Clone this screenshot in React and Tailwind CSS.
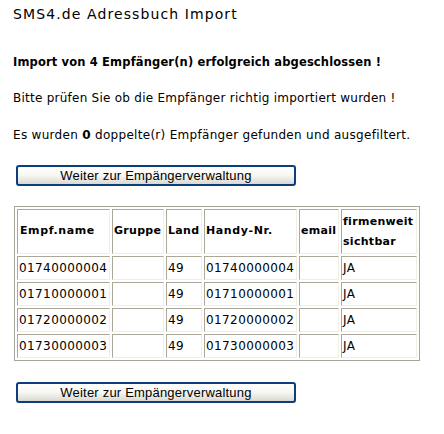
import React from "react";

const rows = [
	["01740000004", "", "49", "01740000004", "", "JA"],
	["01710000001", "", "49", "01710000001", "", "JA"],
	["01720000002", "", "49", "01720000002", "", "JA"],
	["01730000003", "", "49", "01730000003", "", "JA"],
];

const cell =
	"border border-t-[#aca899] border-l-[#aca899] border-b-[#f1efe2] border-r-[#f1efe2] px-px align-middle";

function WeiterButton() {
	return (
		<button className="block ml-[16px] w-[280px] h-[21px] rounded-[3px] border-2 border-[#0c3d7c] bg-gradient-to-b from-white via-[#f6f6f2] to-[#d9d8d0] text-[13px] text-black font-['Liberation_Sans',sans-serif] tracking-[0.2px] leading-none">
			Weiter zur Empängerverwaltung
		</button>
	);
}

export default function App() {
	return (
		<div className="w-[444px] h-[434px] bg-white text-black font-['DejaVu_Sans',Verdana,sans-serif] overflow-hidden">
			{/* TITLE */}
			<h1 className="pl-[13px] pt-[6px] text-[14px] tracking-[1.1px] leading-[16px]">
				SMS4.de Adressbuch Import
			</h1>

			<p className="pl-[13px] mt-[33px] text-[11.5px] font-bold tracking-[0.15px] leading-[14px]">
				Import von 4 Empfänger(n) erfolgreich abgeschlossen !
			</p>

			<p className="pl-[13px] mt-[22px] text-[12px] tracking-[0.25px] leading-[14px]">
				Bitte prüfen Sie ob die Empfänger richtig importiert wurden !
			</p>

			<p className="pl-[13px] mt-[23px] text-[12px] tracking-[0.3px] leading-[14px]">
				Es wurden <b>0</b> doppelte(r) Empfänger gefunden und ausgefiltert.
			</p>

			<div className="mt-[23px]">
				<WeiterButton />
			</div>

			{/* TABLE */}
			<table className="ml-[14px] mt-[20px] w-[404px] table-fixed border-separate border-spacing-[2px] border border-[#a5a59c] text-[12px] tracking-[0.4px]">
				<colgroup>
					<col className="w-[93px]" />
					<col className="w-[52px]" />
					<col className="w-[36px]" />
					<col className="w-[93px]" />
					<col className="w-[40px]" />
					<col className="w-[76px]" />
				</colgroup>
				<thead>
					<tr className="h-[45px] font-bold text-left text-[11px]">
						<th className={cell + " tracking-[0.6px] pl-[2px]"}>Empf.name</th>
						<th className={cell + " tracking-[0.3px]"}>Gruppe</th>
						<th className={cell + " tracking-[0.3px]"}>Land</th>
						<th className={cell + " tracking-[0.6px]"}>Handy-Nr.</th>
						<th className={cell + " tracking-[0.3px]"}>email</th>
						<th className={cell + " leading-[20px] tracking-[0.3px]"}>
							firmenweit
							<br />
							sichtbar
						</th>
					</tr>
				</thead>
				<tbody>
					{rows.map((r, i) => (
						<tr key={i} className="h-[24px]">
							{r.map((v, j) => (
								<td key={j} className={cell}>
									{v}
								</td>
							))}
						</tr>
					))}
				</tbody>
			</table>

			<div className="mt-[21px]">
				<WeiterButton />
			</div>
		</div>
	);
}
